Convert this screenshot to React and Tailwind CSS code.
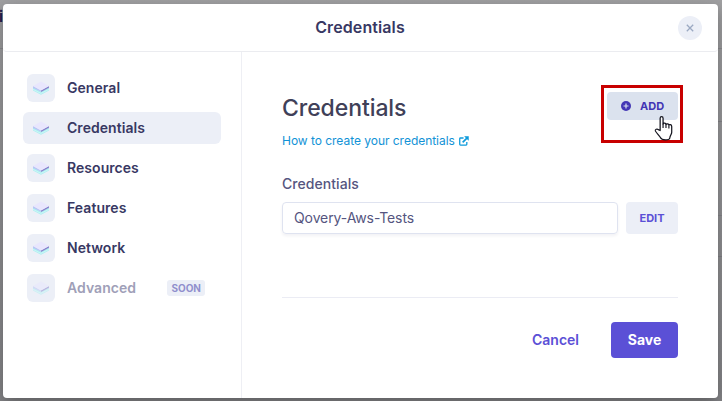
const items = [
  { label: 'General' },
  { label: 'Credentials', active: true },
  { label: 'Resources' },
  { label: 'Features' },
  { label: 'Network' },
  { label: 'Advanced', soon: true },
];

function LayersIcon() {
  return (
    <svg width="16" height="16" viewBox="0 0 16 16" fill="none">
      <path d="M0 7.600 8 11.600 16 7.600V10.400L8 14.800 0 10.400Z" fill="#a9eff0" />
      <path d="M0 9.400 8 13.400 16 9.400" stroke="#dcf8fa" strokeWidth=".7" />
      <path d="M0 6 8 10.200V11.800L0 8Z" fill="#b9c6f5" />
      <path d="M16 6 8 10.200V12L16 7.800Z" fill="#8a83cc" />
      <path d="M8 1.400 16 6 8 10.600 0 6Z" fill="#e8e6fd" />
    </svg>
  );
}

function NavItem({ label, active, soon }) {
  return (
    <div className={`flex h-8 items-center rounded-md pl-1 pr-4 ${active ? 'bg-[#eceff7]' : ''}`}>
      <span className="flex size-7 items-center justify-center rounded-md bg-[#eceff7]">
        <span className={soon ? 'opacity-50' : ''}><LayersIcon /></span>
      </span>
      <span className={`ml-3 pb-0.5 text-[14px] font-semibold tracking-[0.05px] ${soon ? 'text-[#a09fb8]' : 'text-[#383863]'}`}>{label}</span>
      {soon && (
        <span className="ml-auto flex h-4 items-center rounded-[3px] bg-[#eceff7] px-1 text-[10px] font-bold text-[#918fcd]">SOON</span>
      )}
    </div>
  );
}

function PlusIcon() {
  return (
    <svg width="10" height="10" viewBox="0 0 10 10">
      <circle cx="5" cy="5" r="5" fill="#4336b5" />
      <path d="M5 2.5V7.5M2.5 5H7.5" stroke="#dbe2ee" strokeWidth="1.2" />
    </svg>
  );
}

function ExternalIcon() {
  return (
    <svg className="-mt-px" width="10" height="10" viewBox="0 0 11 11" fill="none" stroke="#0d9bdc">
      <path d="M5 2.200H1.600a.8.8 0 0 0-.8.8v6.200c0 .5.3.8.8.8h6.200c.5 0 .8-.3.8-.8V6.600" strokeWidth="1.400" />
      <path d="M4 7 9 2" strokeWidth="1.800" />
      <path d="M6.200.5h4.200v4.200Z" fill="#0d9bdc" strokeWidth=".6" />
    </svg>
  );
}

function HandCursor() {
  return (
    <svg className="absolute left-[50px] top-[28px]" width="20" height="25" viewBox="0 0 19 24">
      <path
        d="M5.500 14.200V2.400C5.500.4 8.300.4 8.300 2.400V8c.2-1.300 2.800-1.200 2.800.5.3-1.100 2.800-1 2.800.6.4-1 2.700-.8 2.700 1.200v5.600c0 2-1.600 3.200-1.800 5.300-.1 1.500-1.400 2-4.300 2-2.500 0-4-.5-4.600-2-.7-1.700-4.400-5-5-6.600-.4-1.400 1.600-2.300 2.800-1.200Z"
        transform="translate(.3 -.3)"
        fill="#fff"
        stroke="#15151f"
        strokeWidth="1.200"
        strokeLinejoin="round"
      />
      <path d="M8.600 7.500V11.500M11.400 8.200V11.500M14.200 9V12" stroke="#15151f" strokeWidth="1.100" />
    </svg>
  );
}

export default function App() {
  return (
    <div className="relative h-[401px] w-[722px] overflow-hidden bg-linear-to-b from-[#a0a0a2] to-[#858588] pl-[3px] pt-1 font-['Inter',sans-serif]">
      <span className="absolute left-[-1px] top-[6px] text-[15px] font-bold text-[#20204a]">i</span>
      <div className="absolute left-0 top-12 h-px w-full bg-[#8c8c90]" />
      <div className="absolute right-0 top-[121px] h-px w-1 bg-[#85858a]" />
      <div className="absolute right-0 top-[215px] h-px w-1 bg-[#85858a]" />
      <div className="absolute right-0 top-[256px] h-px w-1 bg-[#808085]" />
      <div className="relative flex h-[394px] w-[715px] flex-col rounded bg-white shadow-[0_6px_16px_rgba(0,0,0,0.3)]">
        <header className="grid h-12 shrink-0 grid-cols-[1fr_auto_1fr] items-center rounded-b border-b border-[#ebecf0] pr-4">
          <span />
          <h1 className="pb-0.5 pl-[15px] text-[16px] font-semibold tracking-[0.1px] text-[#383863]">Credentials</h1>
          <button className="flex size-6 items-center justify-center justify-self-end rounded-full bg-[#eceff7]">
            <svg width="8" height="8" viewBox="0 0 8 8" stroke="#9ba9c2" strokeWidth="1.300"><path d="M.8.8 7.200 7.200M7.200.8.8 7.200" /></svg>
          </button>
        </header>
        <div className="flex min-h-0 flex-1">
          <nav className="flex w-[239px] shrink-0 flex-col gap-2 border-r border-[#eeeff4] py-5 pl-5 pr-5">
            {items.map((item) => <NavItem key={item.label} {...item} />)}
          </nav>
          <main className="flex flex-1 flex-col px-10 pt-10">
            <div className="flex h-7 items-center justify-between">
              <h2 className="pt-[5px] text-[23px] font-medium tracking-[-0.08px] text-[#404058]">Credentials</h2>
              <div className="relative">
                <button className="flex h-7 w-[71px] items-center rounded bg-[#dbe2ee] pl-[14px] text-[11px] font-bold text-[#4336b5]">
                  <PlusIcon />
                  <span className="ml-[9px]">ADD</span>
                </button>
                <div className="absolute left-[-6px] top-[-7px] h-[58px] w-[82px] border-[3px] border-[#c80000]">
                  <HandCursor />
                </div>
              </div>
            </div>
            <a className="mt-3 flex h-[18px] items-center gap-1 text-[12px] tracking-[-0.03px] text-[#1292d6]">
              <span>How to create your credentials</span>
              <ExternalIcon />
            </a>
            <label className="mt-[25px] h-[18px] text-[14px] leading-[18px] font-medium tracking-[0.05px] text-[#555580]">Credentials</label>
            <div className="mt-[9px] flex gap-2">
              <div className="flex h-8 flex-1 items-center rounded border border-[#dfe3f0] pb-0.5 pl-[11px] text-[14px] tracking-[-0.1px] text-[#555580] shadow-[0_2px_3px_rgba(30,30,80,0.06)]">Qovery-Aws-Tests</div>
              <button className="h-8 w-[52px] rounded bg-[#eceff7] text-[11px] font-bold text-[#5b50d6]">EDIT</button>
            </div>
            <div className="mt-[63px] flex items-center justify-end gap-8 border-t border-[#ebecf4] pt-6">
              <button className="pb-0.5 text-[14px] font-semibold text-[#5b50d6]">Cancel</button>
              <button className="h-9 w-[67px] rounded bg-[#5b50d6] pb-0.5 text-[14px] font-bold text-white">Save</button>
            </div>
          </main>
        </div>
      </div>
    </div>
  );
}
